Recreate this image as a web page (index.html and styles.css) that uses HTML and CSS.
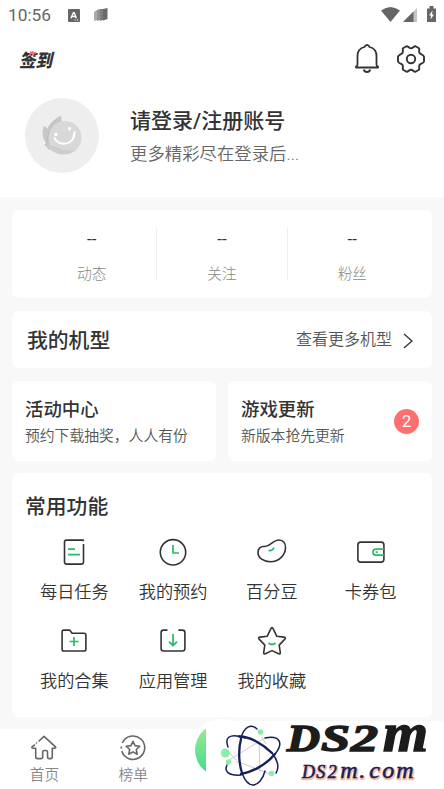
FILE: index.html
```html
<!DOCTYPE html>
<html lang="zh-CN">
<head>
<meta charset="utf-8">
<title>我的</title>
<link rel="stylesheet" href="styles.css">
</head>
<body>
<div class="screen">
  <header class="head">
    <div class="status">
      <span class="time">10:56</span>
      <svg class="s-app" width="12" height="13" viewBox="0 0 12 13"><rect width="12" height="13" rx="1" fill="#666"/><path d="M3 9.3 5.4 3.6h.8L8.3 9.3M4 7.5h3.5" fill="none" stroke="#fff" stroke-width="1.4"/><path d="M6.6 11h1M8.8 11h1.4" stroke="#fff"/></svg>
      <svg class="s-cards" width="14" height="14" viewBox="0 0 14 14"><path d="M0 4 3 2v10L0 13Z" fill="#aaa"/><path d="M3 2 6 1v11l-3 1Z" fill="#929292"/><path d="M6 1h3v11l-3 1Z" fill="#7d7d7d"/><path d="M9 1 13.500 0v11L9 12.500Z" fill="#6a6a6a"/></svg>
      <span class="grow"></span>
      <svg class="s-system" width="56" height="18" viewBox="0 0 56 18"><path d="M0 4.500Q9.500-2.500 19 4.500L9.500 16Z" fill="#666"/><path d="M22 16 36 2v14Z" fill="#c4c4c4"/><path d="M22 16 32.500 5.500V16Z" fill="#666"/><path d="M46 2.500h2.500V0h4v2.500H55V16h-9Z" fill="#666"/><path d="m51.500 4.500-3.500 5h2l-.5 4 3.500-5h-2Z" fill="#fff"/></svg>
    </div>
    <div class="topbar">
      <span class="sign"><svg width="44" height="30" viewBox="-2 -5 44 30"><text class="sign-text" x="-1" y="17.500" textLength="33" lengthAdjust="spacingAndGlyphs">签到</text><path d="m11.600 2.600-2 3.200M11.400 4h4.800M12.800 4.500l.8 2" stroke="#ff6b6b" stroke-width="1.900" fill="none"/></svg></span>
      <span class="grow"></span>
      <svg class="bell" width="24" height="31" viewBox="0 0 24 31" fill="none" stroke="#333" stroke-width="1.800" stroke-linejoin="round"><path d="M1 23.500v-1q1.500-.5 1.500-2V12C2.500 7 5.500 4 9.500 3 10 1.500 11 1 12 1s2 .5 2.500 2c4 1 7 4 7 9v8.500q0 1.500 1.500 2v1Z"/><path d="M8.800 25.500a3.300 3.300 0 0 0 6.400 0"/></svg>
      <svg width="30" height="30" viewBox="0 0 30 30" fill="none" stroke="#333" stroke-width="1.900" stroke-linejoin="round"><path d="M10.500 2.200C12.500 2 13 4.300 15 4.300S17.500 2 19.500 2.200L23 4.200C24 6 22.400 7 23.400 8.800S27 10 28 12.500v5c-1 2.500-3.600 1.900-4.600 3.700S24 24 23 25.800l-3.500 2c-2 .2-2.500-2.100-4.500-2.100s-2.500 2.300-4.500 2.100l-3.500-2C6 24 7.600 23 6.600 21.200S3 20 2 17.500v-5C3 10 5.600 10.600 6.600 8.800S6 6 7 4.200Z"/><circle cx="15" cy="15" r="4.200"/></svg>
    </div>
    <div class="profile">
      <div class="avatar"><svg width="40" height="40" viewBox="0 0 40 40"><path d="M2 10q3 1 3 3Q9 4 19 0l1 7-6 22-7 5-5-6h3Q-2 20 2 10Z" fill="#c8c8c8"/><circle cx="23" cy="21.500" r="16.500" fill="#d8d8d8"/><path d="M5 29q8 1 15 4t15 0q-6 6-16 5.500Q9 37 5 29Z" fill="#cdcdcd"/><path d="M19 0Q8 6 6 20l-2 9" fill="none" stroke="#bdbdbd"/><path d="M12.500 22c3 8 20 9 20-6" fill="none" stroke="#fff" stroke-width="2" stroke-linecap="round"/><circle cx="14" cy="18.500" r="1.700" fill="#fff"/><circle cx="27.500" cy="12.700" r="1.700" fill="#fff"/></svg></div>
      <div>
        <div class="name">请登录/注册账号</div>
        <div class="tagline">更多精彩尽在登录后...</div>
      </div>
    </div>
  </header>

  <main class="content">
    <section class="card stats">
      <div class="stat"><b>--</b><span>动态</span></div>
      <div class="stat"><b>--</b><span>关注</span></div>
      <div class="stat"><b>--</b><span>粉丝</span></div>
    </section>
    <section class="card device">
      <h2>我的机型</h2>
      <span class="more">查看更多机型</span>
      <svg width="10" height="16" viewBox="0 0 10 16" fill="none" stroke="#333" stroke-width="1.300"><path d="m1 1 8 7-8 7"/></svg>
    </section>
    <div class="pair">
      <section class="card promo"><div><h3>活动中心</h3><p>预约下载抽奖，人人有份</p></div></section>
      <section class="card promo"><div><h3>游戏更新</h3><p>新版本抢先更新</p></div><span class="count">2</span></section>
    </div>
    <section class="card tools">
      <h2>常用功能</h2>
      <div class="grid">
        <div class="tool"><svg class="icon" viewBox="0 0 30 30"><path d="M24.200 4.200V3.100H7.500q-2 0-2 2v20q0 2 2 2h15q2 0 2-2V7"/><path class="g" d="M9 12.200h7M9 17.700h12"/></svg><span>每日任务</span></div>
        <div class="tool"><svg class="icon" viewBox="0 0 30 30"><circle cx="15" cy="15.300" r="12.700"/><path class="g" d="M15 8v8h6"/></svg><span>我的预约</span></div>
        <div class="tool"><svg class="icon" viewBox="0 0 30 30"><path d="M7 9.500c6 1 8.500-6.500 15-6.500 4.500 0 6.500 3.500 6.500 7.500 0 8-7 14.200-15 14.200-7 0-12.500-4-12.500-9C1 11.500 3.500 9 7 9.500Z"/><path class="g" d="M11.500 13.500c3 .5 4.500-.5 5.500-3"/></svg><span>百分豆</span></div>
        <div class="tool"><svg class="icon" viewBox="0 0 30 30"><rect x="1.900" y="5.100" width="26" height="20" rx="2.800"/><path class="g" d="M28 12.200h-8a3 3 0 0 0 0 6h8M19.700 15.200h2"/></svg><span>卡券包</span></div>
        <div class="tool"><svg class="icon" viewBox="0 0 30 30"><path d="M3.100 5.600q0-1.500 1.500-1.500h6l2.500 3.100h12q1.800 0 1.800 1.800v14.200q0 1.800-1.800 1.800H4.900q-1.800 0-1.800-1.800Z"/><path class="g" d="M15 11v9M10.500 15.500h9"/></svg><span>我的合集</span></div>
        <div class="tool"><svg class="icon" viewBox="0 0 30 30"><path d="M9.500 4.100H5.600q-2.500 0-2.500 2.500v15.900q0 2.500 2.500 2.500h18.800q2.500 0 2.500-2.500V6.600q0-2.500-2.500-2.500h-4"/><path class="g" d="M15 8v11.500M11 15.700l4 4 4-4"/></svg><span>应用管理</span></div>
        <div class="tool"><svg class="icon" viewBox="0 0 30 30"><path d="M14 2.300q1-1.600 2 0l3.700 7.900 7.400.9q2.200.4.700 2l-5.600 6 1.100 7.500q.1 1.800-1.600 1.200L15 24.600l-6.700 3.200q-1.700.6-1.600-1.200l1.100-7.500-5.600-6q-1.500-1.600.7-2l7.400-.9Z"/><path class="g" d="M11.500 17q3.500 3 7 0"/></svg><span>我的收藏</span></div>
      </div>
    </section>
  </main>

  <nav class="tabs">
    <div class="tab"><svg width="28" height="26" viewBox="0 0 28 26" fill="none" stroke="#666" stroke-width="1.600" stroke-linejoin="round" stroke-linecap="round"><path d="m9 6 5-4.700 11.500 10.500q.7 1.500-1 1.500h-2.200v8.500q0 1.800-1.800 1.800h-1.700q-1.300 0-1.300-1.500V17q0-1.500-1.500-1.500h-1.800q-1.500 0-1.500 1.500v5.100q0 1.500-1.500 1.500H7.500q-1.800 0-1.800-1.800v-8.500H3q-1.500 0-1-1.500L4.500 10M6.500 8h.1"/></svg><span>首页</span></div>
    <div class="tab"><svg width="26" height="26" viewBox="0 0 26 26" fill="none" stroke="#666" stroke-width="1.600" stroke-linejoin="round"><path d="M2.300 8A11.700 11.700 0 1 1 1.800 16M1.300 13.500v-2"/><path d="m13 6.300 2 4.300 4.800.6-3.500 3.300.9 4.700-4.200-2.300-4.200 2.300.9-4.700-3.500-3.300 4.800-.6Z"/></svg><span>榜单</span></div>
    <div class="orb"></div>
  </nav>

  <div class="brand">
    <svg class="brand-art" width="238" height="68" viewBox="0 0 238 68">
      <g fill="none" stroke="#b4b4bc" stroke-width=".7"><path d="m20 41 37-23M22 30l8 9M30 40l34 13M53 20l1 31M56 16l4 7"/></g>
      <g fill="none" stroke="#14205b" stroke-width="1.500" stroke-linecap="round"><path d="M51 8C45 2 38 6 35 17M36 52c3 8 7 12 11 12 5 0 10-6 12-14M22 26C17 12 30 14 39 17M66 32c5 6 8 14 4 20M59 17C74 14 78 22 69 33M35 54C22 55 18 50 21 44"/><path d="M35 18C32 29 33 43 36 52M33 15.500C43 15 57 23 66 32M69 33C60 44 46 51 35 53" stroke-width="2.300"/></g>
      <g fill="#88efab"><circle cx="54.500" cy="11" r="2.800"/><circle cx="19.300" cy="32" r="4.500"/><circle cx="22.500" cy="41" r="2.700"/><circle cx="65.500" cy="52.500" r="2.800"/></g>
      <text class="brand-name" y="30"><tspan x="81" textLength="33" lengthAdjust="spacingAndGlyphs">D</tspan><tspan x="115" textLength="29" lengthAdjust="spacingAndGlyphs">S</tspan><tspan x="145" textLength="27" lengthAdjust="spacingAndGlyphs">2</tspan><tspan class="tall" x="177" textLength="45" lengthAdjust="spacingAndGlyphs">m</tspan></text>
      <text class="brand-glow" x="96.700 111 122.500" y="57.700">DS2<tspan class="tall" x="135 154 164 177 191">m.com</tspan></text>
      <text class="brand-url" x="96 110.300 121.800" y="57">DS2<tspan class="tall" x="134.300 153.300 163.300 176.300 190.300">m.com</tspan></text>
    </svg>
  </div>
</div>
</body>
</html>
```
FILE: styles.css
```css
* { box-sizing: border-box; margin: 0; padding: 0; }
body {
  background: #f8f8f8;
  color: #333;
  font-family: Roboto, "Noto Sans CJK SC", sans-serif;
}
svg { display: block; flex: none; }
.screen {
  position: relative;
  width: 444px;
  height: 789px;
  overflow: hidden;
  display: flex;
  flex-direction: column;
}
.grow { flex: 1; }

.head { height: 197px; background: #fff; flex: none; }
.status { height: 30px; display: flex; align-items: center; padding: 0 8px; }
.s-system { margin-right: -1px; }
.time { width: 60px; font-size: 17.3px; line-height: 30px; color: #666; }
.s-cards { margin-left: 14px; }
.topbar { height: 58px; display: flex; align-items: center; padding: 0 18px; }
.sign-text { font: italic 900 18px "Noto Sans CJK SC", sans-serif; fill: #333; }
.bell { margin: 1px 17px 0 0; }
.profile { display: flex; padding: 10px 25px 0; }
.avatar {
  width: 74px;
  height: 75px;
  margin-right: 31px;
  border-radius: 50%;
  background: #eee;
  display: flex;
  align-items: center;
  justify-content: center;
}
.name { font-size: 21px; font-weight: 500; line-height: 30px; margin-top: 8px; }
.tagline { font-size: 17.3px; font-weight: 350; line-height: 26px; margin-top: 5px; letter-spacing: .1px; color: #666; }

.content { padding: 13px 12px 12px; flex: none; }
.card { background: #fff; border-radius: 7px; }
.stats { height: 88px; padding: 18px 15px; display: flex; }
.stat {
  flex: 1;
  height: 52px;
  display: flex;
  flex-direction: column;
  align-items: center;
}
.stat + .stat { border-left: 1px solid #eee; }
.stat b { font-size: 17px; font-weight: 400; line-height: 22px; }
.stat span { font-size: 14.7px; font-weight: 300; line-height: 22px; margin-top: 13px; color: #888; }
h2 { font-size: 20.8px; font-weight: 500; line-height: 30px; }
.device {
  height: 57px;
  margin-top: 13px;
  padding: 2px 19px 0 15px;
  display: flex;
  align-items: center;
}
.more { margin: -1px 11px 0 auto; font-size: 16px; font-weight: 350; line-height: 24px; color: #555; }
.pair { display: grid; grid-template-columns: 1fr 1fr; gap: 12px; margin-top: 13px; }
.promo { height: 80px; padding: 16px 13px; display: flex; justify-content: space-between; }
h3 { font-size: 18.4px; font-weight: 500; line-height: 26px; }
.promo p { font-size: 14.8px; font-weight: 350; line-height: 22px; margin-top: 2px; color: #555; white-space: nowrap; }
.count {
  width: 25px;
  height: 25px;
  margin-top: 12px;
  border-radius: 50%;
  background: #ff6f70;
  color: #fff;
  font-size: 17px;
  line-height: 25px;
  text-align: center;
}
.tools { height: 244px; margin-top: 12px; padding: 19px 12px 0 13px; }
.grid { display: grid; grid-template-columns: repeat(4, 1fr); grid-auto-rows: 89px; margin-top: 15px; }
.tool { display: flex; flex-direction: column; align-items: center; font-size: 17.2px; font-weight: 350; line-height: 26px; }
.tool span { margin-top: 12px; white-space: nowrap; }
.icon { width: 30px; height: 30px; fill: none; stroke: #333; stroke-width: 1.600; stroke-linejoin: round; }
.icon .g { stroke: #25bd63; stroke-width: 1.700; }

.tabs { height: 60px; background: #fff; display: grid; grid-template-columns: repeat(5, 1fr); flex: none; }
.tab { padding-top: 6px; display: flex; flex-direction: column; align-items: center; }
.tab span { font-size: 14.700px; font-weight: 350; line-height: 20px; margin-top: 4px; color: #888; }
.orb {
  justify-self: center;
  width: 54px;
  height: 54px;
  margin-top: -6px;
  border-radius: 50%;
  background: linear-gradient(160deg, #a8eb94, #3edb8b 75%);
  box-shadow: 0 0 0 4px #fff;
}
.brand {
  position: absolute;
  right: 0;
  bottom: 0;
  width: 238px;
  height: 68px;
  background: #fff;
}
.brand-art { overflow: visible; }
.brand-name { font: italic 700 38px "Liberation Serif", serif; fill: #1c1c1c; stroke: #1c1c1c; stroke-width: 1.500px; }
.brand-name .tall { font-size: 55px; }
.brand-url, .brand-glow { font: italic 400 18px "Liberation Serif", serif; fill: #14205b; stroke: #14205b; stroke-width: .5px; }
.brand-url .tall, .brand-glow .tall { font-size: 24px; }
.brand-glow { fill: #f2a582; stroke: #f7c1a8; stroke-width: 2.500px; }
```
